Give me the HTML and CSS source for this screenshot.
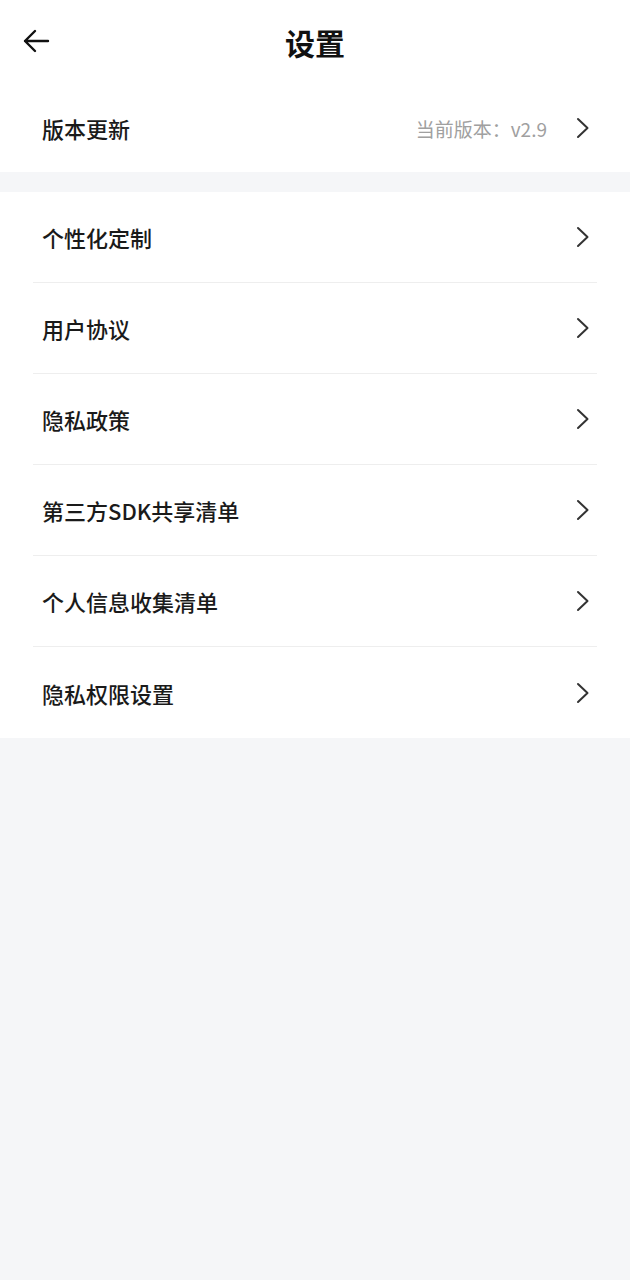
FILE: index.html
```html
<!DOCTYPE html>
<html lang="zh-CN">
<head>
<meta charset="utf-8">
<title>设置</title>
<link rel="stylesheet" href="styles.css">
</head>
<body>
<div class="page">
  <header class="topbar">
    <span class="back">
      <svg width="28" height="26" viewBox="0 0 28 26"><path d="M26 13H3M13 3L3 13l10 10" fill="none" stroke="#111" stroke-width="2.4" stroke-linecap="round" stroke-linejoin="round"/></svg>
    </span>
    <h1 class="title">设置</h1>
  </header>
  <section class="group version">
    <div class="row row-version">
      <span class="label">版本更新</span>
      <span class="meta">当前版本：v2.9</span>
      <svg class="chev" width="14" height="22" viewBox="0 0 14 22"><path d="M2 2l9.5 9L2 20" fill="none" stroke="#333" stroke-width="2" stroke-linecap="round" stroke-linejoin="round"/></svg>
    </div>
  </section>
  <section class="group list">
    <div class="row"><span class="label">个性化定制</span><svg class="chev" width="14" height="22" viewBox="0 0 14 22"><path d="M2 2l9.5 9L2 20" fill="none" stroke="#333" stroke-width="2" stroke-linecap="round" stroke-linejoin="round"/></svg></div>
    <div class="row"><span class="label">用户协议</span><svg class="chev" width="14" height="22" viewBox="0 0 14 22"><path d="M2 2l9.5 9L2 20" fill="none" stroke="#333" stroke-width="2" stroke-linecap="round" stroke-linejoin="round"/></svg></div>
    <div class="row"><span class="label">隐私政策</span><svg class="chev" width="14" height="22" viewBox="0 0 14 22"><path d="M2 2l9.5 9L2 20" fill="none" stroke="#333" stroke-width="2" stroke-linecap="round" stroke-linejoin="round"/></svg></div>
    <div class="row"><span class="label">第三方SDK共享清单</span><svg class="chev" width="14" height="22" viewBox="0 0 14 22"><path d="M2 2l9.5 9L2 20" fill="none" stroke="#333" stroke-width="2" stroke-linecap="round" stroke-linejoin="round"/></svg></div>
    <div class="row"><span class="label">个人信息收集清单</span><svg class="chev" width="14" height="22" viewBox="0 0 14 22"><path d="M2 2l9.5 9L2 20" fill="none" stroke="#333" stroke-width="2" stroke-linecap="round" stroke-linejoin="round"/></svg></div>
    <div class="row"><span class="label">隐私权限设置</span><svg class="chev" width="14" height="22" viewBox="0 0 14 22"><path d="M2 2l9.5 9L2 20" fill="none" stroke="#333" stroke-width="2" stroke-linecap="round" stroke-linejoin="round"/></svg></div>
  </section>
</div>
</body>
</html>
```

FILE: styles.css
```css
html, body {
  margin: 0;
  padding: 0;
  background: #f5f6f8;
  font-family: "Noto Sans CJK SC", "Noto Sans", sans-serif;
  color: #1a1a1a;
}
.page {
  width: 630px;
  min-height: 1280px;
  background: #f5f6f8;
}
.topbar {
  height: 84px;
  background: #fff;
  display: flex;
  align-items: center;
  justify-content: center;
  position: relative;
}
.back {
  position: absolute;
  left: 22px;
  top: 28px;
  display: flex;
}
.title {
  margin: 0;
  font-size: 30px;
  font-weight: 700;
  line-height: 1;
  padding-bottom: 1px;
  color: #111;
}
.group {
  background: #fff;
}
.row {
  display: flex;
  align-items: center;
  height: 91px;
  box-sizing: border-box;
  padding: 0 7px 0 9px;
}
.version .row-version {
  height: 88px;
  padding: 0 40px 0 42px;
}
.list {
  margin-top: 20px;
  padding: 0 33px;
}
.list .row {
  border-bottom: 1px solid #eeeeee;
}
.list .row:last-child {
  border-bottom: none;
}
.label {
  flex: 1;
  font-size: 22px;
  font-weight: 500;
  color: #1a1a1a;
}
.meta {
  font-size: 19px;
  color: #a0a0a0;
  margin-right: 29px;
}
.chev {
  flex: none;
}
```
